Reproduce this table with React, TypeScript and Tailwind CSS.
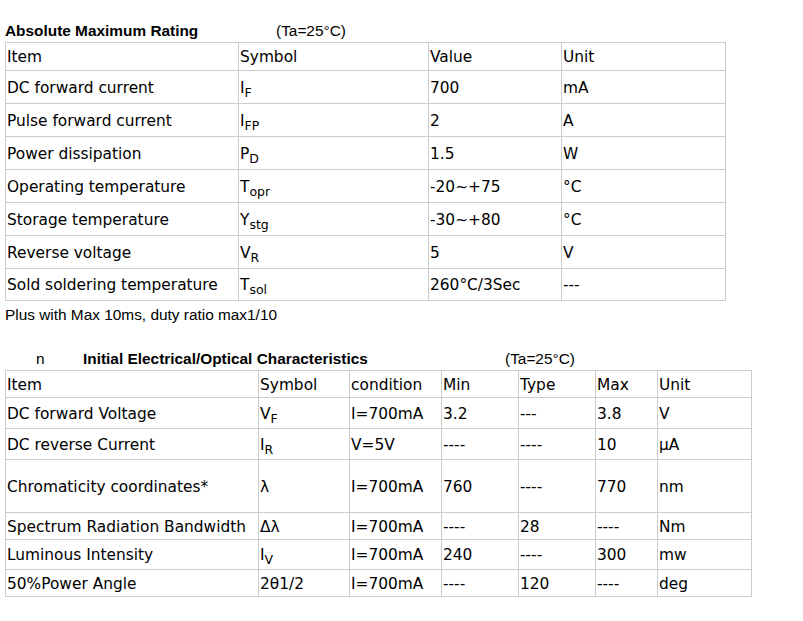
import React from "react";

type Cell = React.ReactNode;

const sym = (base: string, sub?: string) => (
  <span>
    {base}
    {sub && <sub className="text-[12.5px] -bottom-[0.3em]">{sub}</sub>}
  </span>
);

const absRows: { h: string; cells: Cell[] }[] = [
  { h: "h-[28px]", cells: ["Item", "Symbol", "Value", "Unit"] },
  { h: "h-[33px]", cells: ["DC forward current", sym("I", "F"), "700", "mA"] },
  { h: "h-[33px]", cells: ["Pulse forward current", sym("I", "FP"), "2", "A"] },
  { h: "h-[33px]", cells: ["Power dissipation", sym("P", "D"), "1.5", "W"] },
  { h: "h-[33px]", cells: ["Operating temperature", sym("T", "opr"), "-20~+75", "°C"] },
  { h: "h-[33px]", cells: ["Storage temperature", sym("Y", "stg"), "-30~+80", "°C"] },
  { h: "h-[33px]", cells: ["Reverse voltage", sym("V", "R"), "5", "V"] },
  { h: "h-[32px]", cells: ["Sold soldering temperature", sym("T", "sol"), "260°C/3Sec", "---"] },
];

const elecRows: { h: string; cells: Cell[] }[] = [
  { h: "h-[27px]", cells: ["Item", "Symbol", "condition", "Min", "Type", "Max", "Unit"] },
  { h: "h-[31px]", cells: ["DC forward Voltage", sym("V", "F"), "I=700mA", "3.2", "---", "3.8", "V"] },
  { h: "h-[31px]", cells: ["DC reverse Current", sym("I", "R"), "V=5V", "----", "----", "10", "μA"] },
  { h: "h-[53px]", cells: ["Chromaticity coordinates*", "λ", "I=700mA", "760", "----", "770", "nm"] },
  { h: "h-[27px]", cells: ["Spectrum Radiation Bandwidth", "Δλ", "I=700mA", "----", "28", "----", "Nm"] },
  { h: "h-[30px]", cells: ["Luminous Intensity", sym("I", "V"), "I=700mA", "240", "----", "300", "mw"] },
  { h: "h-[27px]", cells: ["50%Power Angle", "2θ1/2", "I=700mA", "----", "120", "----", "deg"] },
];

function DataTable({ cols, rows, width }: { cols: string[]; rows: { h: string; cells: Cell[] }[]; width: string }) {
  return (
    <table className={`${width} table-fixed border-collapse border border-[#cccccc] text-[15.4px] text-black`} style={{ fontFamily: '"DejaVu Sans", Verdana, sans-serif' }}>
      <colgroup>
        {cols.map((w, i) => (
          <col key={i} className={w} />
        ))}
      </colgroup>
      <tbody>
        {rows.map((r, i) => (
          <tr key={i} className={r.h}>
            {r.cells.map((c, j) => (
              <td key={j} className="border border-[#cccccc] px-[1px] pt-[3px] pb-0 align-middle whitespace-nowrap leading-none">
                {c}
              </td>
            ))}
          </tr>
        ))}
      </tbody>
    </table>
  );
}

export default function App() {
  return (
    <div className="w-[803px] h-[621px] bg-white pl-[5px] pt-[20px] text-black" style={{ fontFamily: '"Liberation Sans", Arial, sans-serif' }}>
      <div className="flex items-center h-[22px] text-[15.4px]">
        <span className="font-bold w-[271px]">Absolute Maximum Rating</span>
        <span>(Ta=25°C)</span>
      </div>
      <DataTable
        width="w-[720px]"
        cols={["w-[233px]", "w-[190px]", "w-[133px]", "w-[164px]"]}
        rows={absRows}
      />
      <div className="text-[15.4px] h-[46px] pt-[2px]">Plus with Max 10ms, duty ratio max1/10</div>
      <div className="flex items-center h-[23px] text-[15.4px]">
        <span className="w-[78px] pl-[31px]">n</span>
        <span className="font-bold w-[422px]">Initial Electrical/Optical Characteristics</span>
        <span>(Ta=25°C)</span>
      </div>
      <DataTable
        width="w-[746px]"
        cols={["w-[253px]", "w-[91px]", "w-[92px]", "w-[77px]", "w-[77px]", "w-[62px]", "w-[94px]"]}
        rows={elecRows}
      />
    </div>
  );
}
